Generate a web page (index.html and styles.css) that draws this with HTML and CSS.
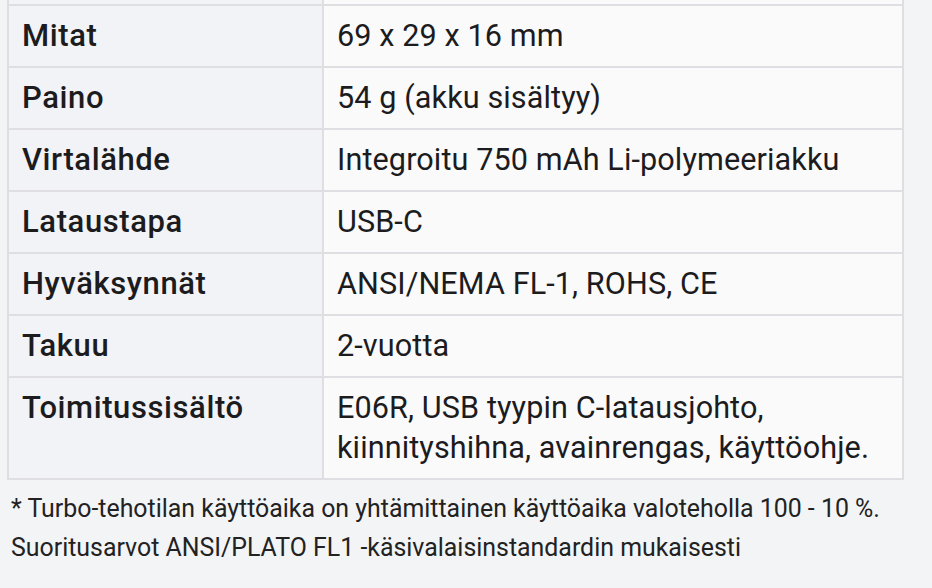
FILE: index.html
```html
<!DOCTYPE html>
<html lang="fi">
<head>
<meta charset="utf-8">
<link rel="stylesheet" href="styles.css">
</head>
<body>
<div class="page">
  <table class="specs">
    <colgroup><col class="col-label"><col class="col-value"></colgroup>
    <tbody>
      <tr class="cut"><th></th><td></td></tr>
      <tr><th>Mitat</th><td>69 x 29 x 16 mm</td></tr>
      <tr><th>Paino</th><td>54 g (akku sisältyy)</td></tr>
      <tr><th>Virtalähde</th><td>Integroitu 750 mAh Li-polymeeriakku</td></tr>
      <tr><th>Lataustapa</th><td>USB-C</td></tr>
      <tr><th>Hyväksynnät</th><td>ANSI/NEMA FL-1, ROHS, CE</td></tr>
      <tr><th>Takuu</th><td>2-vuotta</td></tr>
      <tr><th>Toimitussisältö</th><td>E06R, USB tyypin C-latausjohto,<br>kiinnityshihna, avainrengas, käyttöohje.</td></tr>
    </tbody>
  </table>
  <p class="note">* Turbo-tehotilan käyttöaika on yhtämittainen käyttöaika valoteholla 100 - 10 %.<br>Suoritusarvot ANSI/PLATO FL1 -käsivalaisinstandardin mukaisesti</p>
</div>
</body>
</html>
```
FILE: styles.css
```css
html, body {
  margin: 0;
  padding: 0;
  background: #f3f4f6;
}
body {
  font-family: Roboto, "Liberation Sans", sans-serif;
  color: #1c1c1e;
}
.page {
  padding: 0 28px 0 7px;
}
.specs {
  width: 897px;
  border-collapse: collapse;
  table-layout: fixed;
}
.col-label {
  width: 315px;
}
.specs th,
.specs td {
  border: 2px solid #dfdfe3;
  padding: 10px 13px;
  line-height: 40px;
  text-align: left;
  vertical-align: top;
}
.specs tr:first-child th,
.specs tr:first-child td {
  border-top: none;
}
.specs th {
  background: #f2f3f6;
  font-size: 31px;
  font-weight: 500;
  letter-spacing: 0.6px;
}
.specs td {
  background: #fafafa;
  font-size: 30.6px;
  font-weight: 400;
  letter-spacing: 0.1px;
}
.specs .cut th,
.specs .cut td {
  padding: 0;
  height: 4px;
  line-height: 4px;
  font-size: 0;
}
.note {
  margin: 9px 0 0 4px;
  font-size: 24.9px;
  line-height: 39px;
  color: #222;
}
```
